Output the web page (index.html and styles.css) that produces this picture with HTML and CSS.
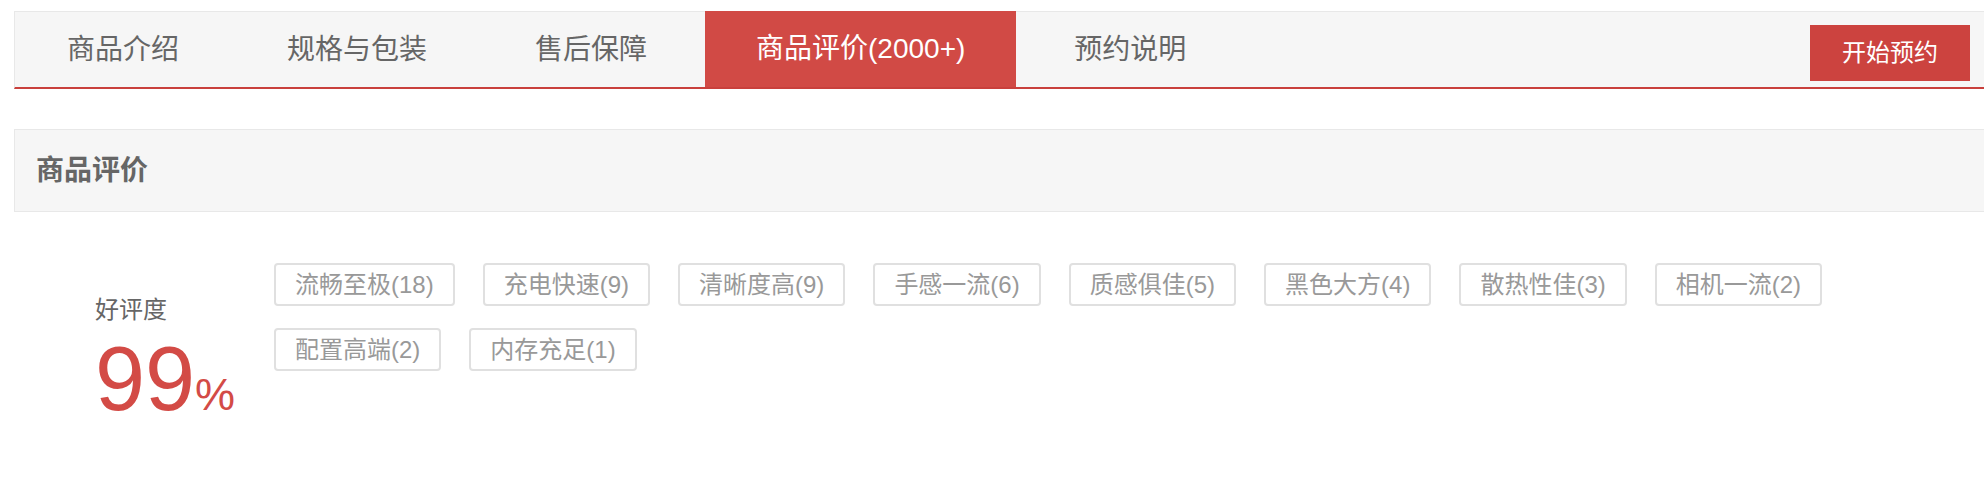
FILE: index.html
```html
<!DOCTYPE html>
<html lang="zh-CN">
<head>
  <meta charset="UTF-8">
  <meta name="viewport" content="width=device-width, initial-scale=1.0">
  <title>商品评价</title>
  <link rel="stylesheet" href="styles.css">
</head>
<body>

<div class="tabbar">
  <ul class="tabs">
    <li>商品介绍</li>
    <li>规格与包装</li>
    <li>售后保障</li>
    <li class="active">商品评价(2000+)</li>
    <li>预约说明</li>
  </ul>
  <a href="#" class="reserve-btn">开始预约</a>
</div>

<div class="section-title">商品评价</div>

<section class="summary">
  <div class="rating">
    <div class="rating-label">好评度</div>
    <div class="rating-value">99<span>%</span></div>
  </div>
  <ul class="tags">
    <li>流畅至极(18)</li>
    <li>充电快速(9)</li>
    <li>清晰度高(9)</li>
    <li>手感一流(6)</li>
    <li>质感俱佳(5)</li>
    <li>黑色大方(4)</li>
    <li>散热性佳(3)</li>
    <li>相机一流(2)</li>
    <li>配置高端(2)</li>
    <li>内存充足(1)</li>
  </ul>
</section>

</body>
</html>
```

FILE: styles.css
```css
body {
  font-family: "Liberation Sans", "Noto Sans CJK SC", sans-serif;
  margin: 0;
  padding: 0;
  background: #fff;
  color: #666;
  overflow: hidden;
}
ul {
  list-style: none;
  margin: 0;
  padding: 0;
}
.tabbar {
  margin: 11px 0 0 14px;
  height: 75px;
  display: flex;
  justify-content: space-between;
  align-items: flex-start;
  background-color: #f6f6f6;
  border-top: 1px solid #e8e8e8;
  border-left: 1px solid #e8e8e8;
  border-bottom: 2px solid #c9403c;
}
.tabs {
  display: flex;
  gap: 8px;
  padding-left: 2px;
}
.tabs li {
  padding: 0 50px;
  font-size: 28px;
  line-height: 75px;
  color: #666;
  cursor: pointer;
}
.tabs li.active {
  margin-top: -1px;
  padding: 0 51px;
  line-height: 76px;
  background-color: #d14a45;
  color: #fff;
}
.reserve-btn {
  margin: 13px 14px 0 0;
  width: 160px;
  height: 56px;
  line-height: 56px;
  text-align: center;
  font-size: 24px;
  color: #fff;
  text-decoration: none;
  background-color: #cc433f;
}
.section-title {
  margin: 40px 0 0 14px;
  height: 81px;
  line-height: 81px;
  padding-left: 21px;
  font-size: 28px;
  font-weight: bold;
  color: #666;
  background-color: #f6f6f6;
  border: 1px solid #e8e8e8;
  border-right: none;
}
.summary {
  display: flex;
  align-items: flex-start;
  margin-left: 14px;
  padding-top: 51px;
}
.rating {
  width: 260px;
  flex-shrink: 0;
  box-sizing: border-box;
  padding: 35px 0 0 81px;
}
.rating-label {
  font-size: 24px;
  line-height: 24px;
  color: #666;
}
.rating-value {
  margin-top: 12px;
  font-size: 90px;
  line-height: 90px;
  color: #d34b46;
  white-space: nowrap;
}
.rating-value span {
  font-size: 45px;
}
.tags {
  display: flex;
  flex-wrap: wrap;
  align-content: flex-start;
  gap: 22px 28px;
}
.tags li {
  padding: 0 19px;
  height: 39px;
  line-height: 39px;
  font-size: 24px;
  color: #999;
  border: 2px solid #e0e0e0;
  border-radius: 4px;
}
```
